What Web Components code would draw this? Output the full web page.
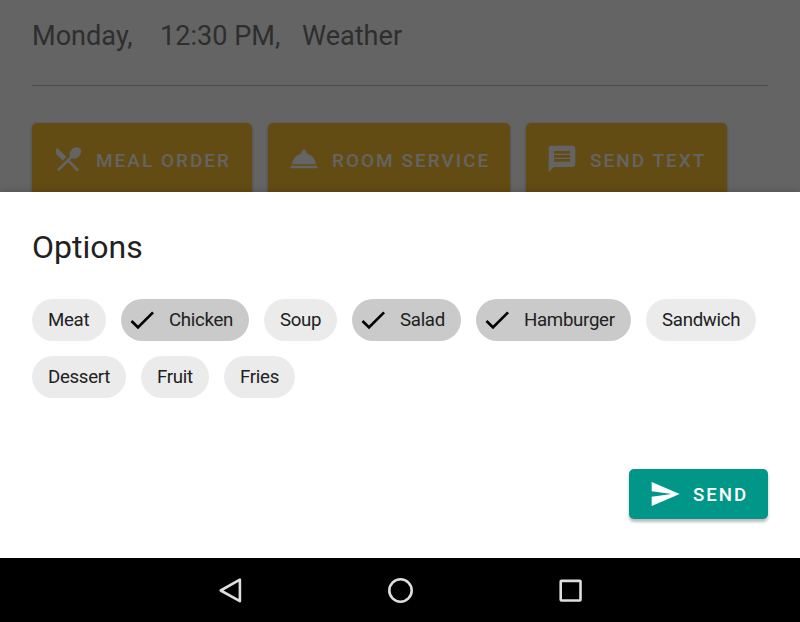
<!DOCTYPE html>
<html lang="en"><head><meta charset="utf-8"><title>Options</title>
<style>
html,body{margin:0;height:100%;overflow:hidden}
body{font-family:Roboto,"Liberation Sans",sans-serif;background:#646464}
</style></head><body>
<options-screen></options-screen>
<script>
const define=(name,html,init)=>customElements.define(name,class extends HTMLElement{
  constructor(){super();this.attachShadow({mode:'open'}).innerHTML=html;}
  connectedCallback(){if(init)init(this,this.shadowRoot);}
});
const paths={
  meal:'M8.1 13.34l2.83-2.83L3.91 3.5a4.008 4.008 0 0 0 0 5.66l4.19 4.18zm6.78-1.81c1.53.71 3.68.21 5.27-1.38 1.91-1.91 2.28-4.65.81-6.12-1.46-1.46-4.2-1.1-6.12.81-1.59 1.59-2.09 3.74-1.38 5.27L3.7 19.87l1.41 1.41L12 14.41l6.88 6.88 1.41-1.41L13.41 13l1.47-1.47z',
  room:'M2 17h20v2H2zm11.84-9.21c.1-.24.16-.51.16-.79 0-1.1-.9-2-2-2s-2 .9-2 2c0 .28.06.55.16.79C6.25 8.6 3.27 11.93 3 16h18c-.27-4.07-3.25-7.4-7.16-8.21z',
  message:'M20 2H4c-1.1 0-1.99.9-1.99 2L2 22l4-4h14c1.1 0 2-.9 2-2V4c0-1.1-.9-2-2-2zm-2 12H6v-2h12v2zm0-3H6V9h12v2zm0-3H6V6h12v2z',
  send:'M2.01 21L23 12 2.01 3 2 10l15 2-15 2z',
  check:'M9 16.17L4.83 12l-1.42 1.41L9 19 21 7l-1.41-1.41z'
};
define('ui-icon',`<style>:host{display:block;width:32px;height:32px;flex:none}svg{display:block;width:100%;height:100%;fill:currentColor}</style><svg viewBox="0 0 24 24"><path/></svg>`,
 (e,r)=>{if(e.hasAttribute('name'))r.querySelector('path').setAttribute('d',paths[e.getAttribute('name')]);});
define('ui-button',`<style>
:host{display:flex;box-sizing:border-box;align-items:center;padding-left:20.3px;gap:11.7px;border-radius:5px;white-space:nowrap;flex:none;font-size:18.67px;font-weight:500;letter-spacing:1.95px;line-height:24px}
ui-icon{margin-bottom:var(--icon-lift,0)}
span{padding-top:2px}
</style><ui-icon></ui-icon><span><slot></slot></span>`,
 (e,r)=>{const i=r.querySelector('ui-icon');i.setAttribute('name',e.getAttribute('icon'));i.replaceWith(i.cloneNode());});
define('option-chip',`<style>
:host{display:flex;box-sizing:border-box;height:42px;align-items:center;padding-left:16px;border-radius:21px;background:#ebebeb;color:#212121;font-size:18.67px;line-height:24px;letter-spacing:-.3px;flex:none;white-space:nowrap}
:host([selected]){background:#cacaca;padding-left:4.5px;gap:11.5px}
ui-icon{display:none;color:#000}:host([selected]) ui-icon{display:block}
</style><ui-icon name="check"></ui-icon><span><slot></slot></span>`);
define('status-header',`<style>
:host{display:flex;height:85px;margin:0 32px;border-bottom:1px solid #4b4b4b;color:#2e2e2e;font-size:27.1px;line-height:32px;box-sizing:content-box}
span{margin-top:20px;white-space:nowrap}.d{width:128px}.t{width:142px}
</style><span class="d">Monday,</span><span class="t">12:30 PM,</span><span>Weather</span>`);
define('action-row',`<style>
:host{display:flex;gap:16px;padding:37px 32px 0;height:69px}
ui-button{--icon-lift:2px;height:90px;padding-bottom:17px;background:#634c13;color:#646464;box-shadow:0 1px 3px #0004;font-size:19px;letter-spacing:2px}
</style><ui-button icon="meal" style="width:220px">MEAL ORDER</ui-button><ui-button icon="room" style="width:242px">ROOM SERVICE</ui-button><ui-button icon="message" style="width:201px">SEND TEXT</ui-button>`);
define('options-sheet',`<style>
:host{display:flex;flex-direction:column;box-sizing:border-box;height:366px;background:#fff;padding:36px 32px 39px;position:relative;box-shadow:0 0 8px #0003}
h1{margin:0;font-size:32px;font-weight:400;line-height:38px;color:#212121}
.chips{display:flex;flex-wrap:wrap;gap:15px;margin-top:33px}
ui-button{width:139px;height:50px;background:#009688;color:#fff;margin:auto 0 0 auto;box-shadow:0 3px 3px #0004}
</style><h1>Options</h1><div class="chips">
<option-chip style="width:74px">Meat</option-chip><option-chip selected style="width:128px">Chicken</option-chip><option-chip style="width:73px">Soup</option-chip><option-chip selected style="width:109px">Salad</option-chip><option-chip selected style="width:155px">Hamburger</option-chip><option-chip style="width:110px">Sandwich</option-chip>
<option-chip style="width:94px">Dessert</option-chip><option-chip style="width:68px">Fruit</option-chip><option-chip style="width:71px">Fries</option-chip>
</div><ui-button icon="send">SEND</ui-button>`);
define('system-nav',`<style>
:host{display:grid;grid-template-columns:170px 170px 170px;justify-content:center;align-items:center;height:64px;background:#000;position:relative}
svg{display:block;margin:auto;width:32px;height:32px;fill:none;stroke:#dedede;stroke-width:2.6;stroke-linejoin:round}
</style><svg viewBox="0 0 32 32"><path d="M25.9 5.7V27.2L6.7 16.5Z"/></svg><svg viewBox="0 0 32 32"><circle cx="16.5" cy="16.5" r="11.2"/></svg><svg viewBox="0 0 32 32"><rect x="6.7" y="6.9" width="19.8" height="19.6" rx=".7"/></svg>`);
define('options-screen',`<style>:host{display:flex;flex-direction:column;width:800px;height:622px;overflow:hidden}status-header,action-row,options-sheet,system-nav{flex:none}</style><status-header></status-header><action-row></action-row><options-sheet></options-sheet><system-nav></system-nav>`);
</script></body></html>
